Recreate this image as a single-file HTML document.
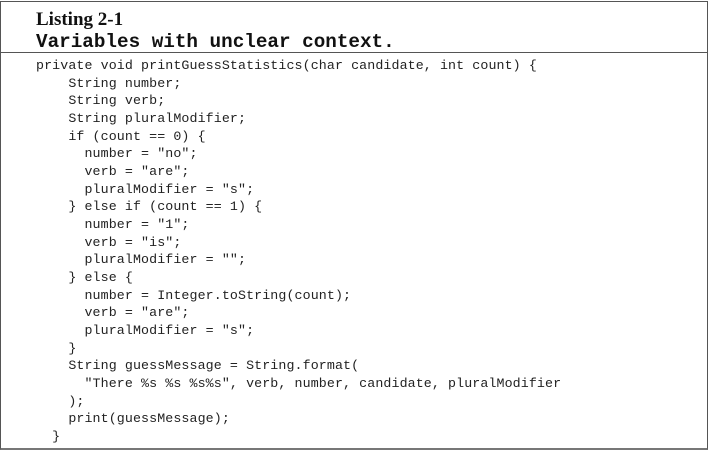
<!DOCTYPE html>
<html><head><style>
body{margin:0;background:#fff;width:709px;height:450px;overflow:hidden;position:relative}
.box{position:absolute;left:0;top:1px;width:706px;height:446px;border:1px solid #555;border-bottom:2px solid #777}
.hl{position:absolute;left:0;top:52px;width:708px;height:1px;background:#555}
.t1{position:absolute;left:36px;top:9px;font:bold 19px "Liberation Serif",serif;color:#111}
.t2{position:absolute;left:36px;top:31px;font:bold 19.3px "Liberation Mono",monospace;color:#111;white-space:pre}
pre{position:absolute;left:36px;top:57px;margin:0;font:13.3px/17.67px "Liberation Mono",monospace;color:#222;letter-spacing:0.1px}
</style></head><body>
<div class="box"></div><div class="hl"></div>
<div class="t1">Listing 2-1</div>
<div class="t2">Variables with unclear context.</div>
<pre>private void printGuessStatistics(char candidate, int count) {
    String number;
    String verb;
    String pluralModifier;
    if (count == 0) {
      number = "no";
      verb = "are";
      pluralModifier = "s";
    } else if (count == 1) {
      number = "1";
      verb = "is";
      pluralModifier = "";
    } else {
      number = Integer.toString(count);
      verb = "are";
      pluralModifier = "s";
    }
    String guessMessage = String.format(
      "There %s %s %s%s", verb, number, candidate, pluralModifier
    );
    print(guessMessage);
  }</pre>
</body></html>
